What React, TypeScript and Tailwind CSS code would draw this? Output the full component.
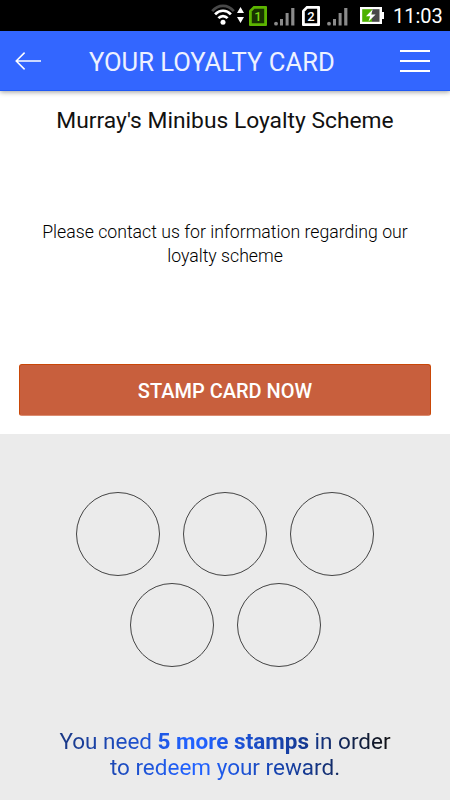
function SignalIcon() {
  return (
    <svg width="21" height="19" viewBox="0 0 21 19" fill="#8b8b8b">
      <circle cx="2" cy="16.7" r="1.9" />
      <rect x="6" y="12" width="3" height="6.5" />
      <rect x="11.6" y="6" width="3" height="12.5" />
      <rect x="17.2" y="1" width="3.2" height="17.5" />
    </svg>
  );
}

function SimIcon({ label, active }: { label: string; active?: boolean }) {
  return (
    <div className="relative flex h-5 w-[18px] items-center justify-center">
      <svg className="absolute inset-0" width="18" height="20" viewBox="0 0 18 20">
        <path
          d="M4.5 0H17a1 1 0 0 1 1 1V19a1 1 0 0 1-1 1H1a1 1 0 0 1-1-1V4.5z"
          fill={active ? "#5cb400" : "#fff"}
        />
        <path d="M5.5 2.8H15.2V17.2H2.8V5.5z" fill={active ? "#183300" : "#000"} />
      </svg>
      <span
        className={`relative mt-px text-[13px] leading-none font-medium ${
          active ? "text-[#79d813]" : "text-white"
        }`}
      >
        {label}
      </span>
    </div>
  );
}

function StatusBar() {
  return (
    <div className="flex h-[31px] shrink-0 items-start bg-black pl-[211px] text-white">
      <svg className="mt-1" width="24" height="22" viewBox="0 0 24 22" fill="none">
        <path d="M1.2 7.2C7.2 .2 16.8 .2 22.8 7.2" stroke="#484848" strokeWidth="2.7" />
        <path d="M4.1 10.4C8.6 5.5 15.4 5.5 19.9 10.4" stroke="#fff" strokeWidth="2.7" />
        <path d="M7.4 14.2C10 11.4 14 11.4 16.6 14.2" stroke="#fff" strokeWidth="2.7" />
        <circle cx="12" cy="18.2" r="2.5" fill="#fff" />
      </svg>
      <svg className="mt-[7px] ml-0.5" width="7" height="17" viewBox="0 0 7 17" fill="#fff">
        <path d="M3.5 0L7 6H0zM0 10H7L3.5 16z" />
      </svg>
      <div className="mt-1.5 ml-[5px]">
        <SimIcon label="1" active />
      </div>
      <div className="mt-[7px] ml-[7px]">
        <SignalIcon />
      </div>
      <div className="mt-1.5 ml-[7px]">
        <SimIcon label="2" />
      </div>
      <div className="mt-[7px] ml-[7px]">
        <SignalIcon />
      </div>
      <svg className="mt-[7px] ml-3" width="25" height="17" viewBox="0 0 25 17">
        <path d="M0 0H22V5H24V12H22V17H0z" fill="#fff" />
        <rect x="2.2" y="2.2" width="9.8" height="12.6" fill="#4db100" />
        <rect x="12" y="2.2" width="7.5" height="12.6" fill="#484848" />
        <path d="M12.8 2.3L6 9.2H10.2L8.5 14.5L15.6 7.6H11.2z" fill="#fff" />
      </svg>
      <span className="mt-1 ml-2 text-[20px] leading-6">11:03</span>
    </div>
  );
}

function Header() {
  return (
    <header className="relative z-10 flex h-[60px] shrink-0 items-center border-b border-[#1f59f5] bg-[#3366ff] text-white shadow-[0_1px_5px_rgba(0,0,0,0.4)]">
      <button className="ml-[15px]">
        <svg width="26" height="18" viewBox="0 0 26 18" fill="none" stroke="#fff" strokeWidth="1.5">
          <path d="M26 9H1.2M9.6 .6L1.2 9L9.6 17.4" />
        </svg>
      </button>
      <h1 className="mt-[3px] ml-[48px] w-[246px] text-[25.6px] leading-8 whitespace-nowrap text-[#edf1ff]">
        YOUR LOYALTY CARD
      </h1>
      <button className="ml-[65px] flex w-[30px] flex-col gap-2">
        <span className="h-0.5 bg-white" />
        <span className="h-0.5 bg-white" />
        <span className="h-0.5 bg-white" />
      </button>
    </header>
  );
}

function Stamp() {
  return <div className="size-[84px] rounded-full border border-[#444]" />;
}

export default function App() {
  return (
    <div className="flex h-[800px] w-[450px] flex-col overflow-hidden bg-white font-['Roboto',sans-serif]">
      <StatusBar />
      <Header />
      <section className="flex h-[343px] shrink-0 flex-col px-[19px] pt-[15px] text-center text-[#111]">
        <h2 className="text-[22.8px] leading-[30px] whitespace-nowrap">
          Murray's Minibus Loyalty Scheme
        </h2>
        <p className="mt-[84px] text-[17.7px] leading-6 font-light text-black">
          Please contact us for information regarding our
          <br />
          loyalty scheme
        </p>
        <button className="mt-24 h-[52px] rounded-[3px] border border-[#c94708] border-b-[#dc8c70] bg-[#c85f3d] pt-px text-[20px] font-medium text-white">
          STAMP CARD NOW
        </button>
      </section>
      <section className="flex flex-1 flex-col items-center bg-[#ebebeb] pt-[58px]">
        <div className="flex gap-[23px]">
          <Stamp />
          <Stamp />
          <Stamp />
        </div>
        <div className="mt-[7px] flex gap-[23px]">
          <Stamp />
          <Stamp />
        </div>
        <p className="mt-[61px] w-[332px] bg-[linear-gradient(90deg,#193783_0%,#2061ff_39%,#2061ff_43%,#14388f_75%,#111_100%)] bg-clip-text text-center text-[22.5px] leading-[26px] whitespace-nowrap text-transparent">
          You need <b>5 more stamps</b> in order
          <br />
          to redeem your reward.
        </p>
      </section>
    </div>
  );
}
